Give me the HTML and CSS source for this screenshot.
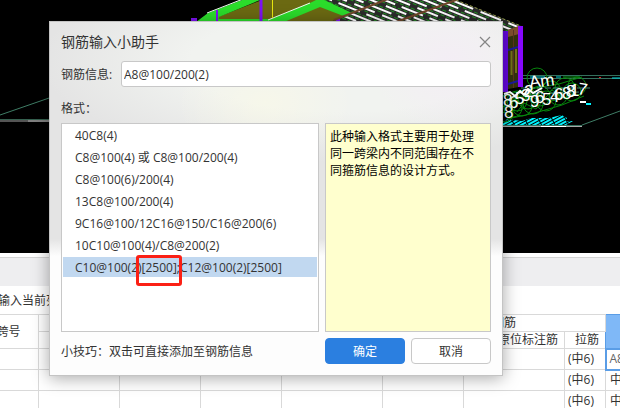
FILE: index.html
```html
<!DOCTYPE html>
<html lang="zh-CN">
<head>
  <meta charset="UTF-8" />
  <meta name="viewport" content="width=device-width, initial-scale=1" />
  <title>钢筋输入小助手</title>
  <link rel="stylesheet" href="styles.css">
</head>
<body>
  <!-- 三维视图 -->
  <div class="scene">
    <svg viewBox="0 0 620 253" preserveAspectRatio="xMinYMin slice" aria-hidden="true">
      <defs>
        <pattern id="slats" width="30" height="10" patternUnits="userSpaceOnUse" patternTransform="rotate(22)">
          <rect width="30" height="10" fill="#2b2b2b"/>
          <path d="M0 1H22M0 6H8M15 6H30" stroke="#fff" stroke-width="2"/>
          <path d="M0 3.500H30M0 8.500H30" stroke="#229422" stroke-dasharray="4 2"/>
        </pattern>
        <pattern id="hatch" width="12" height="3" patternUnits="userSpaceOnUse" patternTransform="rotate(-28)">
          <path d="M0 1H11" stroke="#00f4ff" stroke-width="2"/>
        </pattern>
      </defs>

      <!-- 地面轴线 -->
      <path d="M0 115L52 97" stroke="#3f7d66" fill="none"/>
      <path d="M0 119.500H52" stroke="#35604f"/>
      <path d="M0 121H28" stroke="#a8a8a8"/>
      <path d="M28 121H52" stroke="#fff"/>
      <path d="M522 75.500H620M522 78.500H620" stroke="#34705c"/>
      <path d="M530 77H545M556 77H561M612 78H620" stroke="#00d8e0"/>
      <path d="M563 77H580M548 77H552" stroke="#0a9a1a"/>
      <path d="M599 77.500H601" stroke="#e02020"/>
      <path d="M582 125L620 111" stroke="#3f7d66"/>
      <path d="M502 125.500H582" stroke="#35705c"/>
      <path d="M502 126.500H582" stroke="#a8a8a8"/>
      <path d="M541 126.500H566" stroke="#fff"/>

      <!-- 梁板 -->
      <path d="M205 22L262 0H322L356 14L334 22Z" fill="#6b6912"/>
      <path d="M316 0H456L521 26L506 32L480 22H330L350 14Z" fill="url(#slats)"/>
      <path d="M196 22L208 13L242 0H260L219 17L218 22Z" fill="#2bdc2b"/>
      <path d="M218 20.500H272" stroke="#2bdc2b" stroke-width="3"/>
      <path d="M268 20L310 3L320 -2L352 13L346 17L320 7L284 22H268Z" fill="#2bdc2b"/>
      <path d="M207 13L243 -1M268 20L310 3" stroke="#f0fff0" fill="none"/>
      <path d="M272.500 0V18" stroke="#e6e610"/>
      <path d="M217 10V22" stroke="#7d12f2" stroke-width="2"/>
      <path d="M261 0V22" stroke="#7d12f2" stroke-width="3"/>
      <path d="M191 20H197M336 20H340" stroke="#7d12f2" stroke-width="4"/>
      <path d="M396 22L456 0M334 20L388 -1" stroke="#70452a" stroke-width="2"/>
      <path d="M456 0L521 26" stroke="#9a9a50" stroke-dasharray="3 2"/>

      <!-- 柱 -->
      <path d="M508 30L519 26V87L508 89Z" fill="#34330e"/>
      <path d="M508 30L519 26V34L508 37Z" fill="#80502e"/>
      <path d="M511.500 51V75M516 49V73" stroke="#77721a" stroke-width="2"/>
      <path d="M513.500 30V88" stroke="#5a3420"/>
      <path d="M508 50L518 47M508 84L518 81" stroke="#1b1b9c" stroke-width="2"/>
      <path d="M505.500 31V92" stroke="#6508df" stroke-width="5"/>
      <path d="M520.500 26V87" stroke="#8808ff" stroke-width="5"/>

      <!-- 轴号圆圈 -->
      <path d="M502 125L507 119L522 121L531 118L548 118L562 115L567 118L566 121L573 121L566 125Z" fill="url(#hatch)"/>
      <g fill="none" stroke="#07870d">
        <circle cx="507" cy="104" r="9"/><circle cx="513" cy="108" r="9"/><circle cx="517" cy="101" r="10"/>
        <circle cx="522" cy="106" r="10"/><circle cx="528" cy="99" r="10"/><circle cx="533" cy="104" r="10"/>
        <circle cx="537" cy="78" r="10"/><circle cx="540" cy="96" r="10"/><circle cx="546" cy="101" r="10"/>
        <circle cx="551" cy="91" r="10"/><circle cx="558" cy="96" r="9"/><circle cx="565" cy="88" r="10"/>
        <circle cx="572" cy="92" r="9"/><circle cx="577" cy="86" r="9"/><circle cx="505" cy="114" r="8"/>
        <path d="M503 96L524 90L559 84L582 77M507 119L535 113L562 105L584 96"/>
        <path d="M509 99L520 104L529 94L541 103L552 90L565 99L576 84M517 112L524 103L536 109L547 96"/>
      </g>
      <path d="M521 88L590 88M525 94L580 92M535 101L567 97" stroke="#3f8670" stroke-dasharray="6 2"/>
      <path d="M504 94L510 92L515 96L520 91L524 95L528 89L533 93L542 88" fill="none" stroke="#fff" stroke-width="2"/>

      <!-- 轴号文字 -->
      <g class="marks">
        <text x="530" y="88" transform="rotate(-8 530 88)">A</text>
        <text x="541" y="87" transform="rotate(-8 541 87)">m</text>
        <text x="503" y="106">8</text>
        <text x="504" y="118">8</text>
        <text x="509" y="108">6</text>
        <text x="515" y="104">5</text>
        <text x="521" y="101">3</text>
        <text x="524" y="97">2</text>
        <text x="530" y="107">9</text>
        <text x="535" y="103">6</text>
        <text x="542" y="105">5</text>
        <text x="550" y="102">4</text>
        <text x="554" y="100">6</text>
        <text x="562" y="99">8</text>
        <text x="566" y="97">8</text>
        <text x="570" y="96">1</text>
        <text x="577" y="94" transform="rotate(10 577 94)">7</text>
      </g>
      <path d="M580 102L586 102" stroke="#fff" stroke-width="2"/>
      <path d="M586 104L591 104" stroke="#00f4ff" stroke-width="2"/>
    </svg>
  </div>

  <!-- 平法表格 -->
  <div class="toolbar"></div>
  <div class="sheet">
    <p class="hint">输入当前列数据</p>
    <table>
      <colgroup>
        <col class="col-no"><col><col><col><col class="col-wide"><col><col class="col-wide"><col class="col-tie"><col>
      </colgroup>
      <thead>
        <tr>
          <th rowspan="2">跨号</th>
          <th></th>
          <th></th>
          <th></th>
          <th></th>
          <th colspan="3" class="group">侧面钢筋</th>
          <th rowspan="2" class="picked"></th>
        </tr>
        <tr>
          <th></th><th></th><th></th><th></th><th></th>
          <th class="sub">侧面原位标注筋</th>
          <th class="sub">拉筋</th>
        </tr>
      </thead>
      <tbody>
        <tr>
          <td></td><td></td><td></td><td></td><td></td><td></td><td></td>
          <td>(<span class="dia">中</span>6)</td>
          <td class="editing">A8@100</td>
        </tr>
        <tr>
          <td></td><td></td><td></td><td></td><td></td><td></td><td></td>
          <td>(<span class="dia">中</span>6)</td>
          <td class="last"><span class="dia">中</span>8</td>
        </tr>
        <tr>
          <td></td><td></td><td></td><td></td><td></td><td></td><td></td>
          <td>(<span class="dia">中</span>6)</td>
          <td class="last"><span class="dia">中</span>8</td>
        </tr>
      </tbody>
    </table>
  </div>

  <!-- 输入助手窗口 -->
  <form class="dialog" role="dialog" aria-labelledby="title">
    <div class="title-bar">
      <h1 id="title">钢筋输入小助手</h1>
      <button type="button" class="btn-close" aria-label="关闭">
        <svg width="12" height="12" viewBox="0 0 12 12"><path d="M1 1L11 11M11 1L1 11" stroke="#858585" stroke-width="1.200"/></svg>
      </button>
    </div>
    <div class="field">
      <label for="info">钢筋信息:</label>
      <input type="text" id="info" value="A8@100/200(2)">
    </div>
    <p class="caption" id="formats">格式：</p>
    <div class="panes">
      <ul class="formats" role="listbox" aria-labelledby="formats">
        <li role="option">40C8(4)</li>
        <li role="option">C8@100(4) 或 C8@100/200(4)</li>
        <li role="option">C8@100(6)/200(4)</li>
        <li role="option">13C8@100/200(4)</li>
        <li role="option">9C16@100/12C16@150/C16@200(6)</li>
        <li role="option">10C10@100(4)/C8@200(2)</li>
        <li role="option" aria-selected="true" class="selected">C10@100(2)[2500];C12@100(2)[2500]<span class="mark"></span></li>
      </ul>
      <p class="note">此种输入格式主要用于处理同一跨梁内不同范围存在不同箍筋信息的设计方式。</p>
    </div>
    <div class="actions">
      <p>小技巧：双击可直接添加至钢筋信息</p>
      <button type="submit" class="btn btn-primary">确定</button>
      <button type="button" class="btn">取消</button>
    </div>
  </form>
</body>
</html>
```
FILE: styles.css
```css
*, *::before, *::after {
  box-sizing: border-box;
}
body {
  margin: 0;
  min-height: 100vh;
  position: relative;
  overflow: hidden;
  background: #fff;
  color: #333;
  font: 12px/17px "Open Sans", "Noto Sans CJK SC", sans-serif;
}
h1, p, ul {
  margin: 0;
  padding: 0;
}
input, button {
  font: inherit;
  color: inherit;
}

/* scene */
.scene {
  height: 253px;
  background: #000;
  overflow: hidden;
}
.scene svg {
  display: block;
  width: 100%;
  height: 253px;
}
.marks {
  fill: #fff;
  font: 17px "Liberation Sans", sans-serif;
}

/* sheet */
.toolbar {
  height: 29px;
  margin-top: 4px;
  background: #eeeef0;
  border-top: 1px solid #d4d4d4;
}
.sheet {
  height: 122px;
  margin-left: -22px;
  overflow: hidden;
}
.hint {
  height: 28px;
  padding-left: 20px;
  line-height: 30px;
}
table {
  width: 709px;
  table-layout: fixed;
  border-collapse: collapse;
}
.col-no {
  width: 60px;
}
col {
  width: 81px;
}
.col-wide {
  width: 101px;
}
.col-tie {
  width: 41px;
}
th, td {
  height: 21px;
  padding: 0 3px;
  border: 1px solid #d9d9d9;
  font-weight: 400;
  line-height: 16px;
  white-space: nowrap;
  overflow: hidden;
}
th {
  height: 17px;
  padding: 0;
}
.group {
  padding-right: 4px;
}
.sub {
  padding-left: 4px;
}
.dia {
  font-size: 12px;
}
.picked {
  background: #7fb8f7;
  border-color: #5a9de6;
}
.editing {
  border: 2px solid #5a9de6;
  color: #666;
}
.last {
  padding-left: 4px;
}

/* dialog */
.dialog {
  position: absolute;
  top: 21px;
  left: 49px;
  width: 454px;
  padding: 0 11px 11px;
  border: 1px solid #c4c4c4;
  background:
    radial-gradient(ellipse 90px 60px at 215px 80px, rgba(255, 253, 225, 0.4), transparent),
    radial-gradient(ellipse 80px 70px at 400px 40px, rgba(244, 236, 246, 0.8), transparent),
    linear-gradient(to bottom, transparent 217px, #fdfdfd 234px),
    radial-gradient(ellipse 300px 100px at 290px 40px, #f1f3f0 50%, transparent),
    #e4e4e4;
  box-shadow: 0 2px 16px rgba(0, 0, 0, 0.35);
}
.title-bar {
  display: flex;
  align-items: center;
  justify-content: space-between;
  height: 39px;
}
h1 {
  font-size: 14px;
  font-weight: 400;
}
.btn-close {
  display: flex;
  padding: 0;
  border: 0;
  background: none;
  cursor: pointer;
}
.field {
  display: flex;
  align-items: center;
}
.field label {
  width: 60px;
}
.field input {
  flex: 1;
  min-width: 0;
  height: 26px;
  padding: 1px 2px 0;
  border: 1px solid #c8c8c8;
  border-radius: 3px;
  background: #fff;
}
.caption {
  height: 36px;
  padding-top: 4px;
  line-height: 36px;
}
.panes {
  display: flex;
  gap: 6px;
  height: 209px;
}
.formats {
  flex: 1;
  padding: 1px;
  border: 1px solid #c8c8c8;
  background: #fff;
  list-style: none;
}
.formats li {
  position: relative;
  height: 20px;
  margin-bottom: 2px;
  padding: 1px 0 0 12px;
  line-height: 20px;
  cursor: default;
}
.selected {
  background: #c1d8f0;
}
.mark {
  position: absolute;
  top: -2px;
  left: 73px;
  width: 46px;
  height: 31px;
  border: 3px solid #fb2015;
  border-radius: 3px;
}
.note {
  width: 166px;
  padding: 4px 10px 4px 4px;
  border: 1px solid #c8c8c8;
  background: #ffffce;
  color: #000;
}
.actions {
  display: flex;
  align-items: center;
  gap: 6px;
  padding-top: 6px;
}
.actions p {
  flex: 1;
}
.btn {
  width: 80px;
  height: 26px;
  padding: 0;
  border: 1px solid #c8c8c8;
  border-radius: 4px;
  background: #fff;
  cursor: pointer;
}
.btn-primary {
  border-color: #2b7fe0;
  background: #2b7fe0;
  color: #fff;
}
.btn-primary:hover {
  background: #1f6fcc;
}
```
